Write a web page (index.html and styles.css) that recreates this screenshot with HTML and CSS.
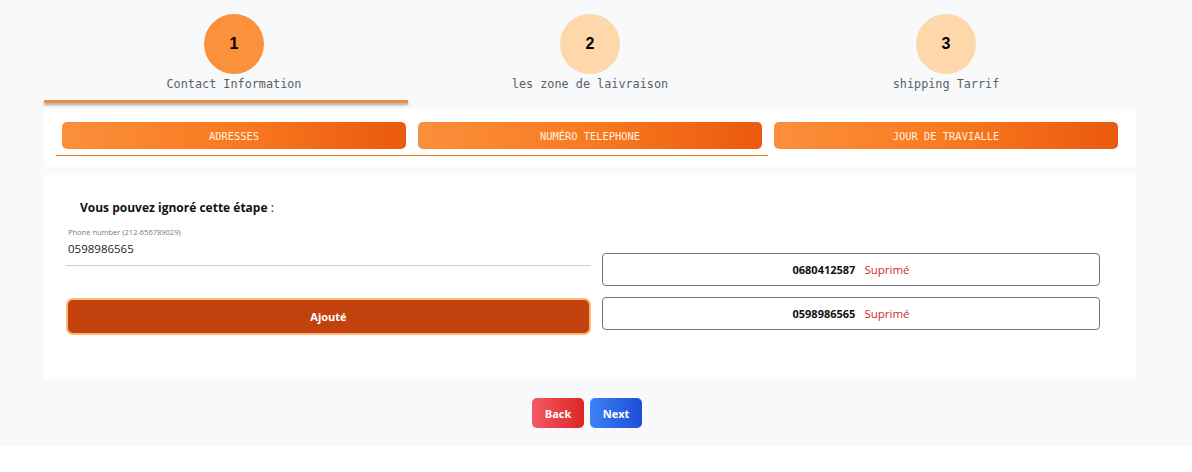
FILE: index.html
```html
<!DOCTYPE html>
<html lang="fr">
<head>
<meta charset="utf-8">
<title>Contact Information</title>
<link rel="stylesheet" href="styles.css">
</head>
<body>
<div class="page">
  <div class="container">
    <div class="steps">
      <div class="step">
        <div class="circle active">1</div>
        <div class="step-label">Contact Information</div>
      </div>
      <div class="step">
        <div class="circle">2</div>
        <div class="step-label">les zone de laivraison</div>
      </div>
      <div class="step">
        <div class="circle">3</div>
        <div class="step-label">shipping Tarrif</div>
      </div>
    </div>
    <div class="step-indicator"></div>

    <div class="tab-panel">
      <div class="tabs">
        <button class="tab">ADRESSES</button>
        <button class="tab">NUMÉRO TELEPHONE</button>
        <button class="tab">JOUR DE TRAVIALLE</button>
      </div>
      <div class="tab-indicator"></div>
    </div>

    <div class="card">
      <div class="left">
        <div class="title">Vous pouvez ignoré cette étape <span class="colon">:</span></div>
        <label class="field-label">Phone number (212-656789029)</label>
        <div class="field-input">0598986565</div>
        <button class="add-btn">Ajouté</button>
      </div>
      <div class="right">
        <div class="phone-item"><span class="num">0680412587</span><span class="del">Suprimé</span></div>
        <div class="phone-item"><span class="num">0598986565</span><span class="del">Suprimé</span></div>
      </div>
    </div>

    <div class="nav">
      <button class="nav-btn back">Back</button>
      <button class="nav-btn next">Next</button>
    </div>
  </div>
</div>
</body>
</html>
```

FILE: styles.css
```css
* { box-sizing: border-box; }

html, body {
  margin: 0;
  padding: 0;
  background: #ffffff;
  font-family: "Open Sans", "Noto Sans", sans-serif;
}

.page {
  background: #f8f9fb;
  padding: 14px 0 18px;
}

.container {
  margin-left: 44px;
  width: 1092px;
}

.steps {
  display: grid;
  grid-template-columns: repeat(3, 1fr);
  column-gap: 12px;
  padding: 0 18px;
}

.step {
  display: flex;
  flex-direction: column;
  align-items: center;
}

.circle {
  width: 60px;
  height: 60px;
  border-radius: 50%;
  background: #fed7aa;
  color: #000;
  display: flex;
  align-items: center;
  justify-content: center;
  font-family: "Liberation Sans", Arial, sans-serif;
  font-weight: 700;
  font-size: 16px;
}

.circle.active {
  background: #fb913b;
}

.step-label {
  margin-top: 3px;
  font-family: "DejaVu Sans Mono", "Liberation Mono", monospace;
  font-size: 11.8px;
  line-height: 14px;
  color: #5a5f66;
}

.step-indicator {
  margin-top: 9px;
  width: 364px;
  height: 3px;
  background: #f28c3e;
  box-shadow: 0 2px 3px rgba(0, 0, 0, 0.35);
}

.tab-panel {
  margin-top: 6px;
  background: #ffffff;
  height: 58px;
  padding: 13px 18px 0;
}

.tabs {
  display: grid;
  grid-template-columns: repeat(3, 1fr);
  column-gap: 12px;
}

.tab {
  height: 27px;
  border: none;
  border-radius: 5px;
  background: linear-gradient(90deg, #fb8f3c 0%, #f97a20 50%, #ea590f 100%);
  color: #fff1e2;
  font-family: "DejaVu Sans Mono", "Liberation Mono", monospace;
  font-size: 10.4px;
  padding: 0;
}

.tab-indicator {
  margin-top: 6px;
  margin-left: -6px;
  width: 712px;
  height: 1px;
  background: #ef7d1f;
}

.card {
  margin-top: 8px;
  background: #ffffff;
  padding: 24px 36px 44px 22px;
  display: grid;
  grid-template-columns: 525px 498px;
  column-gap: 11px;
  align-items: start;
}

.left {
  display: flex;
  flex-direction: column;
}

.title {
  padding-left: 14px;
  font-size: 12px;
  line-height: 18px;
  font-weight: 700;
  color: #111;
}

.colon {
  font-weight: 400;
}

.field-label {
  margin-top: 10px;
  padding-left: 2px;
  font-size: 7.5px;
  line-height: 10px;
  color: #7a7a7a;
}

.field-input {
  margin-top: 4px;
  padding: 0 0 8px 2px;
  font-size: 11.5px;
  line-height: 16px;
  color: #222;
  border-bottom: 1px solid #cfcfcf;
}

.add-btn {
  margin-top: 32px;
  height: 37px;
  border: 2px solid #fcb67c;
  border-radius: 7px;
  background: #c2410c;
  color: #fff;
  font-family: "Open Sans", "Noto Sans", sans-serif;
  font-weight: 700;
  font-size: 11px;
}

.right {
  margin-top: 54px;
  display: flex;
  flex-direction: column;
  gap: 11px;
}

.phone-item {
  height: 33px;
  border: 1px solid #6b7480;
  border-radius: 4px;
  display: flex;
  align-items: center;
  justify-content: center;
  gap: 9px;
}

.num {
  font-weight: 700;
  font-size: 11px;
  color: #111;
}

.del {
  font-size: 11.5px;
  color: #cc2b2b;
}

.nav {
  margin-top: 19px;
  display: flex;
  justify-content: center;
  gap: 6px;
  padding-right: 6px;
}

.nav-btn {
  width: 52px;
  height: 30px;
  border: none;
  border-radius: 5px;
  color: #fff;
  font-family: "Open Sans", "Noto Sans", sans-serif;
  font-weight: 700;
  font-size: 11px;
  padding: 0;
}

.back {
  background: linear-gradient(90deg, #f15a63, #dc2626);
}

.next {
  background: linear-gradient(90deg, #3b82f6, #1d4ed8);
}
```
